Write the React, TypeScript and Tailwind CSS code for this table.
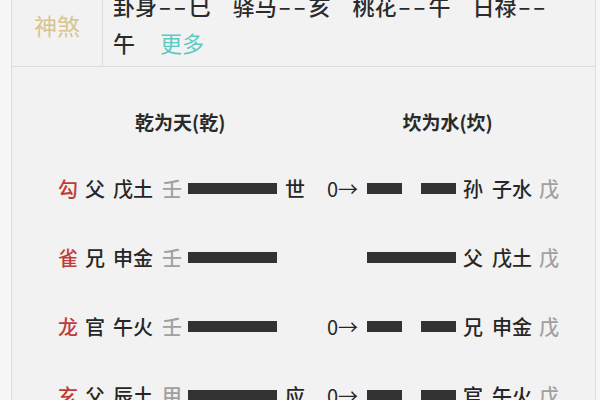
import React from "react";

type Row = {
  god: string;
  rel: string;
  branch: string;
  stem: string;
  mark: string;
  moving: boolean;
  rightBroken: boolean;
  rRel: string;
  rBranch: string;
  rStem: string;
};

const rows: Row[] = [
  { god: "勾", rel: "父", branch: "戊土", stem: "壬", mark: "世", moving: true, rightBroken: true, rRel: "孙", rBranch: "子水", rStem: "戊" },
  { god: "雀", rel: "兄", branch: "申金", stem: "壬", mark: "", moving: false, rightBroken: false, rRel: "父", rBranch: "戊土", rStem: "戊" },
  { god: "龙", rel: "官", branch: "午火", stem: "壬", mark: "", moving: true, rightBroken: true, rRel: "兄", rBranch: "申金", rStem: "戊" },
  { god: "玄", rel: "父", branch: "辰土", stem: "甲", mark: "应", moving: true, rightBroken: true, rRel: "官", rBranch: "午火", rStem: "戊" },
];

const font = { fontFamily: '"Noto Sans CJK SC", "Noto Sans", sans-serif' };

function Bar({ broken }: { broken: boolean }) {
  if (broken) {
    return (
      <div className="flex w-[89px] h-[11px] justify-between">
        <div className="w-[35px] h-full bg-[#333333]" />
        <div className="w-[35px] h-full bg-[#333333]" />
      </div>
    );
  }
  return <div className="w-[89px] h-[11px] bg-[#333333]" />;
}

function Dashes() {
  return <span className="tracking-[3px] ml-[2px]">––</span>;
}

export default function App() {
  return (
    <div
      className="w-[600px] h-[400px] overflow-hidden bg-[#f7f7f7] pl-[11px] pr-[4px]"
      style={font}
    >
      <div className="h-[420px] border-l border-r border-[#dddddd] bg-[#f2f2f2] -mt-[13px]">
        {/* top section */}
        <div className="flex h-[80px] border-b border-[#dddddd]">
          <div className="w-[91px] border-r border-[#dddddd] flex justify-center pt-[23px]">
            <span className="text-[23px] leading-[30px] text-[#d8c48f]">神煞</span>
          </div>
          <div className="pl-[10px] text-[22px] leading-[37px] text-[#2b2b2b] font-medium">
            <div className="flex whitespace-nowrap">
              <span>卦身<Dashes />巳</span>
              <span className="ml-[22px]">驿马<Dashes />亥</span>
              <span className="ml-[22px]">桃花<Dashes />午</span>
              <span className="ml-[22px]">日禄<Dashes /></span>
            </div>
            <div className="flex whitespace-nowrap">
              <span>午</span>
              <span className="ml-[25px] text-[#5ccac3] font-normal">更多</span>
            </div>
          </div>
        </div>

        {/* body */}
        <div className="pt-[35px]">
          <div className="flex h-[40px] items-center text-[19px] font-bold text-[#2a2a2a]">
            <span className="ml-[123px]">乾为天(乾)</span>
            <span className="ml-[177px]">坎为水(坎)</span>
          </div>
          <div className="mt-[12px]">
            {rows.map((r, i) => (
              <div
                key={i}
                className="h-[69px] pl-[46px] grid grid-cols-[27px_28px_49px_26px_97px_42px_40px_96px_29px_47px_30px] items-center text-[20px] font-medium text-[#262626] whitespace-nowrap"
              >
                <span className="text-[#c23b3b]">{r.god}</span>
                <span>{r.rel}</span>
                <span>{r.branch}</span>
                <span className="text-[#a0a0a0]">{r.stem}</span>
                <Bar broken={false} />
                <span>{r.mark}</span>
                <span className="font-normal">{r.moving ? "0→" : ""}</span>
                <Bar broken={r.rightBroken} />
                <span>{r.rRel}</span>
                <span>{r.rBranch}</span>
                <span className="text-[#a0a0a0]">{r.rStem}</span>
              </div>
            ))}
          </div>
        </div>
      </div>
    </div>
  );
}
